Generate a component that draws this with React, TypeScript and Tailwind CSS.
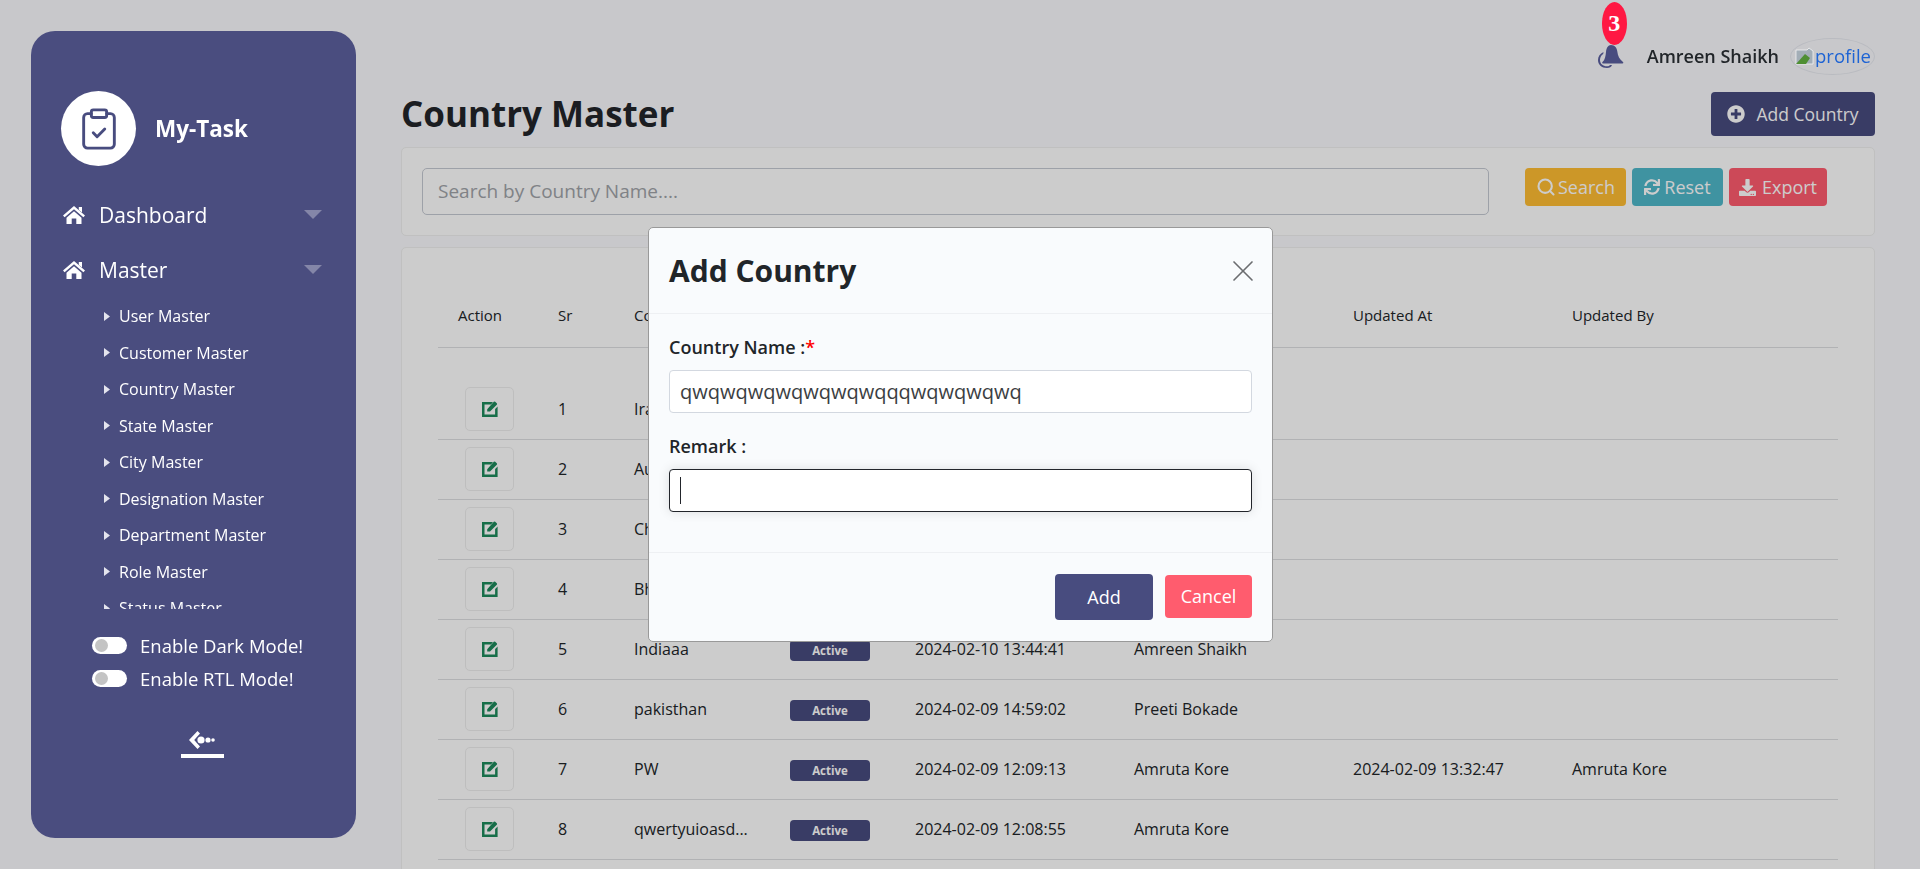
import React from "react";
import { FaPlusCircle, FaSync, FaDownload } from "react-icons/fa";
import { ClipboardCheck, Search, X } from "lucide-react";

const subMenu = [
  "User Master",
  "Customer Master",
  "Country Master",
  "State Master",
  "City Master",
  "Designation Master",
  "Department Master",
  "Role Master",
  "Status Master",
];

const rows = [
  { sr: 1, name: "Iran", status: false, created: "", by: "", updated: "", updatedBy: "" },
  { sr: 2, name: "Australia", status: false, created: "", by: "", updated: "", updatedBy: "" },
  { sr: 3, name: "China", status: false, created: "", by: "", updated: "", updatedBy: "" },
  { sr: 4, name: "Bhutan", status: false, created: "", by: "", updated: "", updatedBy: "" },
  { sr: 5, name: "Indiaaa", status: true, created: "2024-02-10 13:44:41", by: "Amreen Shaikh", updated: "", updatedBy: "" },
  { sr: 6, name: "pakisthan", status: true, created: "2024-02-09 14:59:02", by: "Preeti Bokade", updated: "", updatedBy: "" },
  { sr: 7, name: "PW", status: true, created: "2024-02-09 12:09:13", by: "Amruta Kore", updated: "2024-02-09 13:32:47", updatedBy: "Amruta Kore" },
  { sr: 8, name: "qwertyuioasd...", status: true, created: "2024-02-09 12:08:55", by: "Amruta Kore", updated: "", updatedBy: "" },
];

const HomeIcon = () => (
  <svg width="22" height="18" viewBox="0 0 22 18" fill="white">
    <path d="M11 0 22 9.5 20.4 11.2 11 3.2 1.6 11.2 0 9.5z" />
    <path d="M15.8 1H19v5.6l-3.2-2.7z" />
    <path d="M3.5 11.8 11 5.2l7.5 6.6V18h-5.2v-5.4H8.7V18H3.5z" />
  </svg>
);

const BellIcon = () => (
  <svg width="27" height="25" viewBox="0 0 27 25" fill="#484c7f">
    <path d="M14 1c4 0 6 3 6.4 7 .4 4 2 7 5.6 10 .6.5.3 1.5-.5 1.5H6c-.8 0-1.1-1-.5-1.500C8 16 8.600 12 9 8c.4-4 2-7 5-7z" />
    <path d="M6.500 8C3 9.500 1 12.500 1 16c0 4.500 3.500 8 9 8 2.500 0 4.500-1 5-3h-2c-.5 1-1.500 1.300-3 1.300-4 0-7-2.500-7-6.300 0-2.500 1.200-4.800 3.200-6z" />
  </svg>
);

const EditIcon = () => (
  <svg width="16" height="16" viewBox="0 0 16 16">
    <path d="M0 1h11L9 3.400H2.500v10.100h10.600V8l2.500-2.400V16H0z" fill="#1d8a5c" />
    <path d="M5.200 8.200 11.800.8a1 1 0 0 1 1.400 0l1.600 1.500a1 1 0 0 1 0 1.400L8 10.600H5.200z" fill="#1d8a5c" />
  </svg>
);

const BackIcon = () => (
  <svg width="28" height="20" viewBox="0 0 28 20" fill="white">
    <path d="M9.500 1 12 3.400 6.200 10l5.800 6.600L9.500 19 1 10z" />
    <circle cx="13" cy="10" r="3.600" />
    <circle cx="20" cy="10" r="2.600" />
    <circle cx="25" cy="10" r="1.800" />
  </svg>
);

const BrokenImage = () => (
  <svg width="20" height="18" viewBox="0 0 20 18" className="shrink-0">
    <path d="M1 3h11l2-2 4 3v13H1z" fill="#a3aeb7" stroke="#f2f3f4" strokeWidth="0.8" />
    <path d="M1 17 10 7l5 4-4 6z" fill="#4f8f33" />
  </svg>
);

const Toggle = ({ label }: { label: string }) => (
  <div className="flex items-center h-[33px]">
    <div className="w-[35px] h-[17px] rounded-full bg-white flex items-center pl-[3px]">
      <div className="w-[13px] h-[13px] rounded-full bg-[#c4c4c4]" />
    </div>
    <span className="ml-[13px] text-[18.5px] text-white">{label}</span>
  </div>
);

const NavItem = ({ label }: { label: string }) => (
  <div className="flex items-center h-[55px] pl-[32px] pr-[34px]">
    <HomeIcon />
    <span className="ml-[14px] mt-[2px] text-[21px] text-white flex-1">{label}</span>
    <svg width="18" height="9" viewBox="0 0 18 9">
      <path d="M0 0h18L9 9z" fill="#8486a8" />
    </svg>
  </div>
);

const Sidebar = () => (
  <aside className="relative z-20 flex flex-col shrink-0 w-[325px] h-[807px] mt-[31px] ml-[31px] rounded-[24px] bg-[#4a4d7f]">
    <div className="flex items-center mt-[60px] ml-[30px]">
      <div className="flex items-center justify-center w-[75px] h-[75px] rounded-full bg-white">
        <ClipboardCheck className="w-[46px] h-[46px] text-[#484c7f]" strokeWidth={1.5} />
      </div>
      <span className="ml-[19px] text-[22.5px] font-bold text-white">My-Task</span>
    </div>
    <nav className="mt-[21px]">
      <NavItem label="Dashboard" />
      <NavItem label="Master" />
    </nav>
    <ul className="h-[312px] overflow-hidden pl-[73px] pt-[1px]">
      {subMenu.map((item) => (
        <li key={item} className="flex items-center h-[36.5px] text-[16px] text-white">
          <svg width="6" height="9" viewBox="0 0 6 9" className="mr-[9px]">
            <path d="M0 0l6 4.5L0 9z" fill="#e4e4ee" />
          </svg>
          {item}
        </li>
      ))}
    </ul>
    <div className="mt-[20px] ml-[61px]">
      <Toggle label="Enable Dark Mode!" />
      <Toggle label="Enable RTL Mode!" />
    </div>
    <div className="flex flex-col items-center mt-[35px] mr-[-17px]">
      <BackIcon />
      <div className="w-[43px] h-[4px] bg-white mt-[4px]" />
    </div>
  </aside>
);

const TopBar = () => (
  <header className="relative z-20 flex items-center justify-end h-[92px] pt-[20px]">
    <div className="relative mr-[23px]">
      <BellIcon />
      <span className="absolute left-[5px] top-[-42px] flex items-center justify-center w-[25px] h-[43px] rounded-[50%] bg-[#ff1843] text-white text-[24px] font-bold font-['Liberation_Serif',serif]">
        3
      </span>
    </div>
    <span className="text-[18px] font-semibold text-[#212529]">Amreen Shaikh</span>
    <div className="flex items-center justify-start pl-[4px] ml-[11px] w-[85px] h-[37px] rounded-[50%] border border-[#b9bbc0] overflow-hidden">
      <BrokenImage />
      <span className="text-[18.5px] text-[#1d63d4]">profile</span>
    </div>
  </header>
);

const SearchCard = () => (
  <div className="flex items-start h-[89px] mt-[11px] pt-[20px] pl-[20px] bg-white border border-[#f0f0f0] rounded-[5px]">
    <div className="flex items-center w-[1067px] h-[47px] pl-[15px] bg-white border border-[#c5cad3] rounded-[5px] text-[19px] text-[#a0a3a8]">
      Search by Country Name....
    </div>
    <div className="flex gap-[6px] ml-[36px] text-white text-[18px]">
      <button className="flex items-center justify-center gap-[2px] w-[101px] h-[38px] rounded-[4px] bg-[#ffbd33]">
        <Search className="w-[20px] h-[20px]" strokeWidth={2.5} />
        Search
      </button>
      <button className="flex items-center justify-center gap-[4px] w-[91px] h-[38px] rounded-[4px] bg-[#4fb8ca]">
        <FaSync className="w-[16px] h-[16px]" />
        Reset
      </button>
      <button className="flex items-center justify-center gap-[6px] w-[98px] h-[38px] rounded-[4px] bg-[#ff5c6e]">
        <FaDownload className="w-[17px] h-[17px]" />
        Export
      </button>
    </div>
  </div>
);

const CountryTable = () => (
  <div className="mt-[11px] pl-[36px] pr-[35px] pt-[32px] h-[700px] bg-white border border-[#f0f0f0] rounded-[5px]">
    <table className="w-[1400px] table-fixed text-left text-[16px] text-[#212529]">
      <colgroup>
        <col className="w-[100px]" />
        <col className="w-[76px]" />
        <col className="w-[176px]" />
        <col className="w-[125px]" />
        <col className="w-[219px]" />
        <col className="w-[219px]" />
        <col className="w-[219px]" />
        <col />
      </colgroup>
      <thead>
        <tr className="h-[67px] border-b border-[#dedfe2] text-[15px]">
          <th className="pl-[20px] pt-[4px] font-normal">Action</th>
          <th className="pl-[20px] pt-[4px] font-normal">Sr</th>
          <th className="pl-[20px] pt-[4px] font-normal">Country Name</th>
          <th className="pt-[4px] font-normal">Status</th>
          <th className="pt-[4px] font-normal">Created At</th>
          <th className="pt-[4px] font-normal">Created By</th>
          <th className="pt-[4px] font-normal">Updated At</th>
          <th className="pt-[4px] font-normal">Updated By</th>
        </tr>
        <tr className="h-[32px]" />
      </thead>
      <tbody>
        {rows.map((row) => (
          <tr key={row.sr} className="h-[60px] border-b border-[#dedfe2]">
            <td className="pl-[27px]">
              <div className="flex items-center justify-center w-[49px] h-[44px] rounded-[5px] border border-[#eeeeee]">
                <EditIcon />
              </div>
            </td>
            <td className="pl-[20px]">{row.sr}</td>
            <td className="pl-[20px]">{row.name}</td>
            <td>
              {row.status && (
                <span className="inline-flex items-center justify-center w-[80px] h-[21px] rounded-[4px] bg-[#484b7f] text-white text-[11.5px] font-bold">
                  Active
                </span>
              )}
            </td>
            <td>{row.created}</td>
            <td>{row.by}</td>
            <td>{row.updated}</td>
            <td>{row.updatedBy}</td>
          </tr>
        ))}
      </tbody>
    </table>
  </div>
);

const AddCountryModal = () => (
  <div className="fixed inset-0 z-30 flex items-start justify-center pt-[227px] pl-[1px]">
    <div className="w-[625px] h-[415px] rounded-[5px] border border-[#999999] bg-[#f9fbfd] text-[#212529]">
      <div className="flex items-center justify-between h-[86px] px-[20px] border-b border-[#eef0f3]">
        <h2 className="text-[30px] font-bold">Add Country</h2>
        <X className="w-[36px] h-[36px] text-[#6b6d70] mr-[-9px]" strokeWidth={1.1} />
      </div>
      <div className="h-[239px] px-[20px] pt-[22px] border-b border-[#eef0f3]">
        <label className="block text-[18px] font-semibold leading-[22px]">
          Country Name :<span className="text-[#ff0000]">*</span>
        </label>
        <div className="flex items-center h-[43px] mt-[12px] pl-[10px] bg-white border border-[#d3d8e0] rounded-[4px] text-[20px] text-[#3b3e42]">
          qwqwqwqwqwqwqwqqqwqwqwqwq
        </div>
        <label className="block mt-[22px] text-[18px] font-semibold leading-[22px]">Remark :</label>
        <div className="flex items-center h-[43px] mt-[12px] pl-[10px] bg-white border border-[#22252b] rounded-[4px] shadow-[0_0_12px_rgba(0,0,0,0.12)]">
          <div className="w-px h-[27px] bg-[#22252b]" />
        </div>
      </div>
      <div className="flex justify-end items-center gap-[12px] h-[88px] px-[20px] text-[18px] text-white">
        <button className="w-[98px] h-[46px] rounded-[4px] bg-[#484c7f]">Add</button>
        <button className="w-[87px] h-[43px] mb-[2px] rounded-[4px] bg-[#ff5c6e]">Cancel</button>
      </div>
    </div>
  </div>
);

export default function App() {
  return (
    <div className="flex h-screen overflow-hidden bg-[#fafbfe] font-['Open_Sans',sans-serif]">
      <Sidebar />
      <main className="flex-1 pl-[45px] pr-[45px]">
        <TopBar />
        <div className="flex items-center justify-between h-[44px]">
          <h1 className="text-[35px] font-bold text-[#22252a]">Country Master</h1>
          <button className="flex items-center justify-center gap-[11px] w-[164px] h-[44px] rounded-[4px] bg-[#484b7f] text-[17.5px] text-white">
            <FaPlusCircle className="w-[18px] h-[18px]" />
            Add Country
          </button>
        </div>
        <SearchCard />
        <CountryTable />
      </main>
      <div className="fixed inset-0 z-10 bg-black/20" />
      <AddCountryModal />
    </div>
  );
}
